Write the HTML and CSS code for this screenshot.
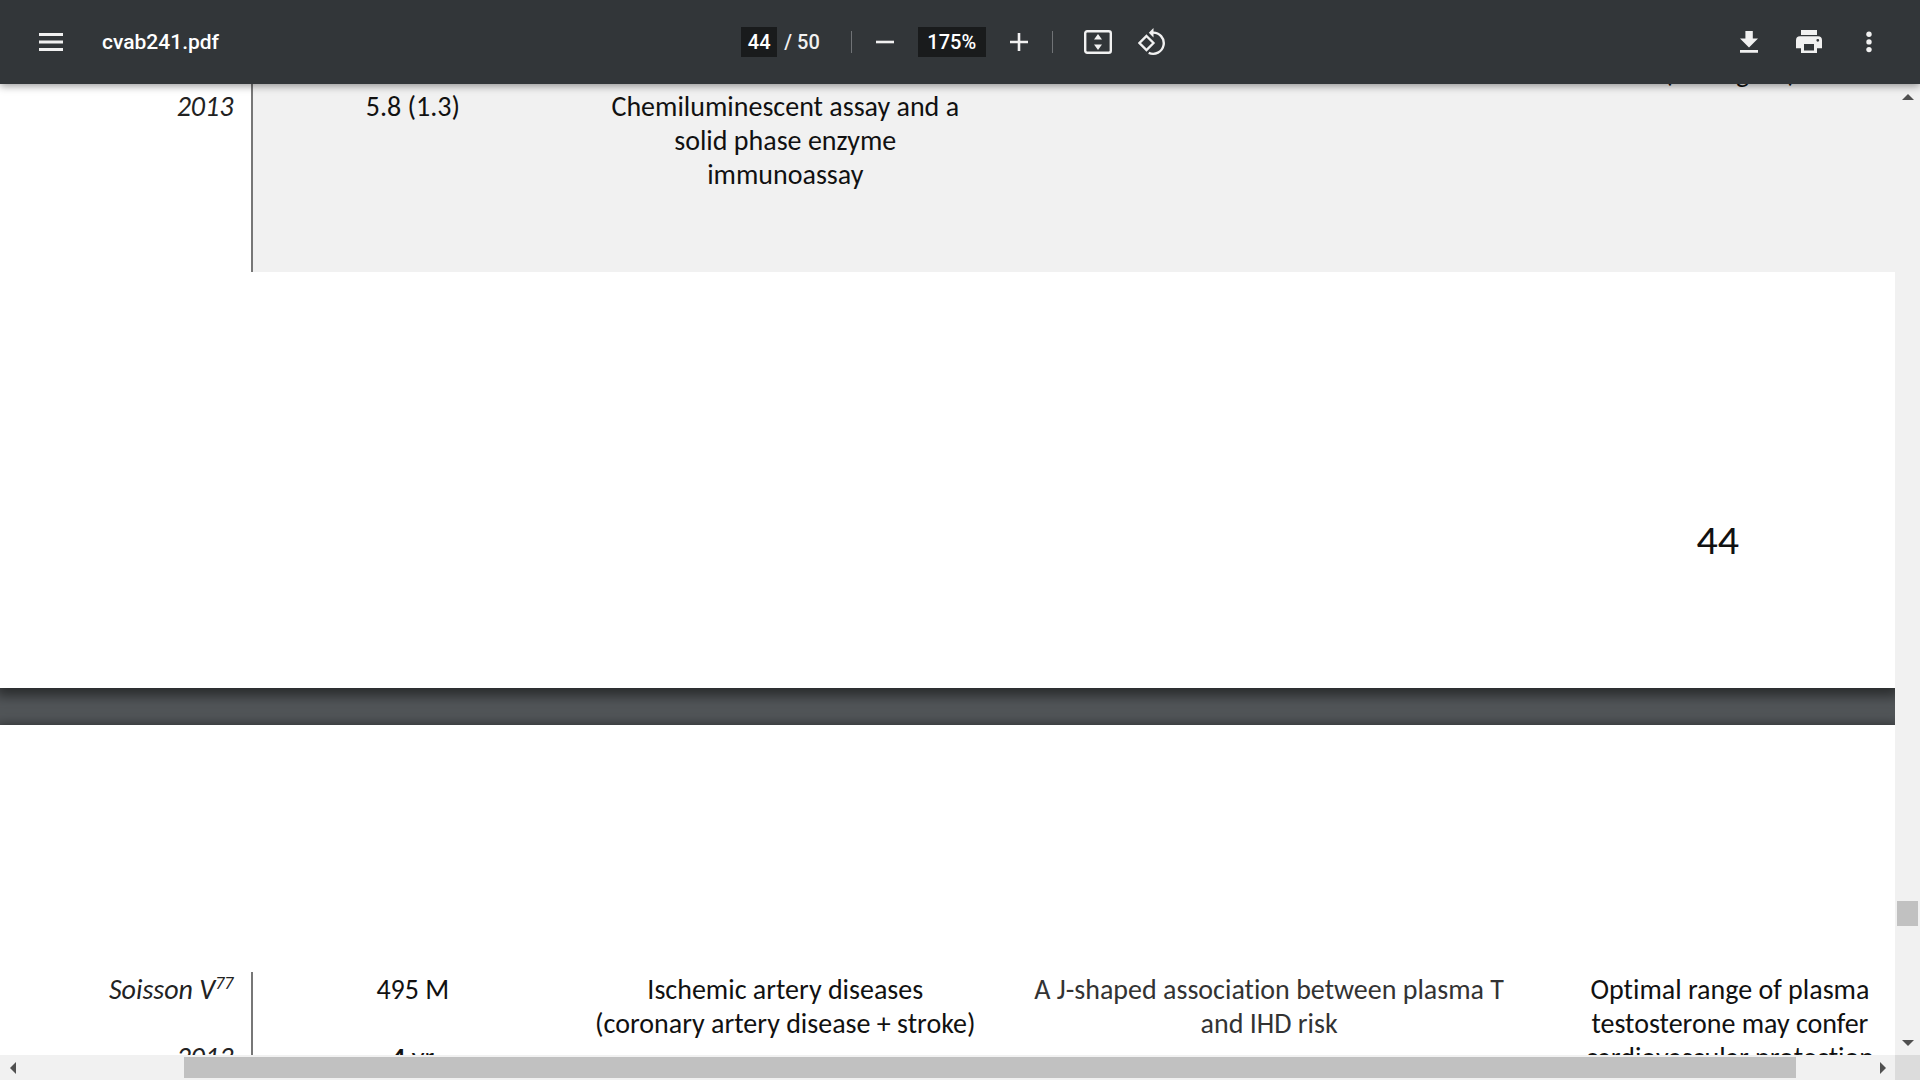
FILE: index.html
```html
<!DOCTYPE html>
<html lang="en">
<head>
    <meta charset="UTF-8">
    <meta name="viewport" content="width=device-width, initial-scale=1.0">
    <title>cvab241.pdf</title>
    <link rel="stylesheet" href="styles.css">
</head>
<body>
    <header class="toolbar">
        <div class="start">
            <button class="icon" aria-label="Menu">
                <svg width="24" height="18" viewBox="0 0 24 18"><path d="M0 0h24v3H0zM0 7.5h24v3H0zM0 15h24v3H0z"/></svg>
            </button>
            <span class="title">cvab241.pdf</span>
        </div>

        <div class="center">
            <input class="field page-field" type="text" value="44" aria-label="Page number">
            <span class="page-count">/ 50</span>
            <span class="divider"></span>
            <button class="icon" aria-label="Zoom out">
                <svg width="18" height="18" viewBox="0 0 18 18"><path d="M0 7.7h18v2.6H0z"/></svg>
            </button>
            <input class="field zoom-field" type="text" value="175%" aria-label="Zoom level">
            <button class="icon" aria-label="Zoom in">
                <svg width="18" height="18" viewBox="0 0 18 18"><path d="M0 7.7h7.7V0h2.6v7.7H18v2.6h-7.7V18H7.7v-7.7H0z"/></svg>
            </button>
            <span class="divider"></span>
            <button class="icon fit" aria-label="Fit to page">
                <svg width="28" height="24" viewBox="0 0 28 24">
                    <rect x="1.2" y="1.2" width="25.6" height="21.6" rx="2" fill="none" stroke="#f1f1f1" stroke-width="2.4"/>
                    <path d="M14 4l4 5.5h-8zM14 20l4-5.5h-8z"/>
                </svg>
            </button>
            <button class="icon" aria-label="Rotate counterclockwise">
                <svg width="28" height="28" viewBox="0 0 28 28">
                    <path d="M8.5 8l7 7-7 7-7-7z" fill="none" stroke="#f1f1f1" stroke-width="2.3"/>
                    <path d="M14.5 4.6a10.6 10.6 0 1 1-3.8 20.2" fill="none" stroke="#f1f1f1" stroke-width="2.4"/>
                    <path d="M15.5 0v9.4L10.8 4.7z"/>
                </svg>
            </button>
        </div>

        <div class="end">
            <button class="icon" aria-label="Download">
                <svg width="18" height="22" viewBox="0 0 18 22"><path d="M5.4 0h7.4v7.6H18L9 16.4 0 7.6h5.4zM0 19h18v2.8H0z"/></svg>
            </button>
            <button class="icon" aria-label="Print">
                <svg width="26" height="24" viewBox="0 0 26 24">
                    <path fill-rule="evenodd" d="M5 0h16v5H5zM4 6.3h18a4 4 0 0 1 4 4v7.9h-5V23H5v-4.8H0v-7.9a4 4 0 0 1 4-4zM8 14v6.4h10V14zM21.8 8.9a1.4 1.4 0 1 0 0 2.8 1.4 1.4 0 0 0 0-2.8z"/>
                </svg>
            </button>
            <button class="icon" aria-label="More actions">
                <svg width="6" height="22" viewBox="0 0 6 22"><circle cx="3" cy="3.2" r="2.7"/><circle cx="3" cy="10.9" r="2.7"/><circle cx="3" cy="18.6" r="2.7"/></svg>
            </button>
        </div>
    </header>

    <div class="viewer">
        <main class="pages">
            <section class="page page-44">
                <table>
                    <colgroup><col class="study"><col class="sample"><col class="method"><col class="result"><col class="outcome"></colgroup>
                    <tr class="shaded">
                        <th scope="row">2013</th>
                        <td>5.8 (1.3)</td>
                        <td>Chemiluminescent assay and a<br>solid phase enzyme<br>immunoassay</td>
                        <td></td>
                        <td class="continued">(250 ng/dL)</td>
                    </tr>
                </table>
                <p class="page-number">44</p>
            </section>

            <section class="page page-45">
                <table>
                    <colgroup><col class="study"><col class="sample"><col class="method"><col class="result"><col class="outcome"></colgroup>
                    <tr>
                        <th scope="row">Soisson V<sup>77</sup><br><br>2013</th>
                        <td>495 M<br><br><b>4</b> yr</td>
                        <td>Ischemic artery diseases<br>(coronary artery disease + stroke)</td>
                        <td class="muted">A J-shaped association between plasma T<br>and IHD risk</td>
                        <td>Optimal range of plasma<br>testosterone may confer<br>cardiovascular protection</td>
                    </tr>
                </table>
            </section>
        </main>

        <div class="scrollbar vertical">
            <button class="arrow" aria-label="Scroll up"><svg width="12" height="6" viewBox="0 0 12 6"><path d="M6 0l6 6H0z"/></svg></button>
            <div class="track"><div class="thumb"></div></div>
            <button class="arrow" aria-label="Scroll down"><svg width="12" height="6" viewBox="0 0 12 6"><path d="M0 0h12L6 6z"/></svg></button>
        </div>
        <div class="scrollbar horizontal">
            <button class="arrow" aria-label="Scroll left"><svg width="6" height="12" viewBox="0 0 6 12"><path d="M6 0v12L0 6z"/></svg></button>
            <div class="track"><div class="thumb"></div></div>
            <button class="arrow" aria-label="Scroll right"><svg width="6" height="12" viewBox="0 0 6 12"><path d="M0 0l6 6-6 6z"/></svg></button>
        </div>
        <div class="corner"></div>
    </div>
</body>
</html>
```

FILE: styles.css
```css
* {
    box-sizing: border-box;
}
body {
    margin: 0;
    height: 100vh;
    overflow: hidden;
    display: flex;
    flex-direction: column;
    font-family: Carlito, Lato, sans-serif;
    color: #111;
}
button {
    display: flex;
    align-items: center;
    justify-content: center;
    padding: 0;
    border: none;
    background: none;
    cursor: pointer;
}

/* Toolbar */
.toolbar {
    position: relative;
    z-index: 1;
    flex: none;
    height: 84px;
    padding: 0 31px;
    display: grid;
    grid-template-columns: 1fr auto 1fr;
    align-items: center;
    background-color: #323639;
    box-shadow: 0 2px 8px rgba(0, 0, 0, 0.4);
    color: #f1f1f1;
    font-family: Roboto, sans-serif;
    font-size: 20px;
    font-weight: 500;
}
.start, .center, .end {
    display: flex;
    align-items: center;
}
.start {
    gap: 31px;
}
.center {
    padding-right: 7px;
}
.end {
    justify-content: flex-end;
    gap: 20px;
}
.icon {
    width: 40px;
    height: 40px;
}
.icon svg {
    fill: #f1f1f1;
}
.title {
    color: #fff;
    font-size: 21px;
}
.field {
    height: 30px;
    padding: 0;
    border: none;
    background-color: #191b1c;
    color: #fff;
    font: inherit;
    text-align: center;
}
.page-field {
    width: 36px;
    margin-right: 7px;
}
.page-count {
    margin-right: 18px;
}
.zoom-field {
    width: 68px;
    margin: 0 13px;
}
.divider {
    width: 1px;
    height: 22px;
    margin: 0 13px;
    background-color: #707376;
}
.fit {
    margin: 0 14px 0 12px;
}

.viewer {
    flex: 1;
    min-height: 0;
    display: grid;
    grid-template-columns: minmax(0, 1fr) 25px;
    grid-template-rows: minmax(0, 1fr) 25px;
}
.pages {
    margin-top: -30px;
    overflow: hidden;
    background-color: #525659;
}
.page {
    background-color: #fff;
    box-shadow: 0 4px 12px 4px rgba(0, 0, 0, 0.5);
}
.page-44 {
    height: 634px;
    margin-bottom: 37px;
}
.page-45 {
    padding-top: 247px;
}
table {
    width: 100vw;
    table-layout: fixed;
    border-spacing: 0;
    font-size: 28px;
    font-variant-ligatures: none;
    line-height: 34px;
}
.study {
    width: 13.2%;
}
.sample {
    width: 16.6%;
}
.method {
    width: 22.2%;
}
.result {
    width: 28.2%;
}
th, td {
    padding: 1px 0 0;
    text-align: center;
    vertical-align: top;
    white-space: nowrap;
}
th {
    padding-right: 18px;
    border-right: 2px solid #777;
    color: #222;
    font-style: italic;
    font-weight: 400;
    text-align: right;
}
sup {
    font-size: 18px;
    line-height: 0;
}
.shaded {
    height: 218px;
}
.shaded td {
    background-color: #f1f1f1;
}
.shaded th, .shaded td {
    padding-top: 36px;
}
.shaded .continued {
    padding-top: 2px;
}
.muted {
    color: #333;
}
.page-number {
    width: 100vw;
    margin: 243px 0 0;
    padding-right: 181px;
    font-size: 42px;
    line-height: 50px;
    text-align: right;
}

/* Scrollbars */
.scrollbar {
    display: flex;
    background-color: #f1f1f1;
}
.vertical {
    flex-direction: column;
}
.arrow {
    flex: none;
    width: 25px;
    height: 25px;
}
.arrow svg {
    fill: #505050;
}
.track {
    flex: 1;
    display: flex;
    padding: 2px;
}
.vertical .track {
    flex-direction: column;
    padding-top: 792px;
}
.horizontal .track {
    padding-left: 159px;
    padding-right: 74px;
}
.thumb {
    background-color: #c1c1c1;
}
.vertical .thumb {
    height: 25px;
}
.horizontal .thumb {
    flex: 1;
}
.corner {
    background-color: #dcdcdc;
}
```
